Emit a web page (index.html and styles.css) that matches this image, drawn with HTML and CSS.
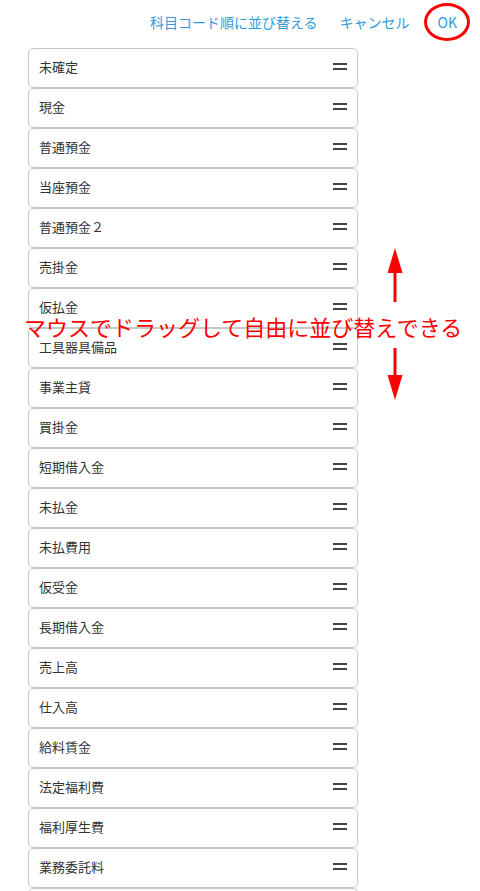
FILE: index.html
```html
<!DOCTYPE html>
<html lang="ja">
<head>
  <meta charset="UTF-8">
  <title>科目の並び替え</title>
  <link rel="stylesheet" href="styles.css">
</head>
<body>
  <header class="toolbar">
    <a class="link">科目コード順に並び替える</a>
    <a class="link">キャンセル</a>
    <a class="link ok">OK</a>
  </header>

  <ul class="sort-list">
    <li class="item"><span>未確定</span><i class="handle"></i></li>
    <li class="item"><span>現金</span><i class="handle"></i></li>
    <li class="item"><span>普通預金</span><i class="handle"></i></li>
    <li class="item"><span>当座預金</span><i class="handle"></i></li>
    <li class="item"><span>普通預金２</span><i class="handle"></i></li>
    <li class="item"><span>売掛金</span><i class="handle"></i></li>
    <li class="item"><span>仮払金</span><i class="handle"></i></li>
    <li class="item"><span>工具器具備品</span><i class="handle"></i></li>
    <li class="item"><span>事業主貸</span><i class="handle"></i></li>
    <li class="item"><span>買掛金</span><i class="handle"></i></li>
    <li class="item"><span>短期借入金</span><i class="handle"></i></li>
    <li class="item"><span>未払金</span><i class="handle"></i></li>
    <li class="item"><span>未払費用</span><i class="handle"></i></li>
    <li class="item"><span>仮受金</span><i class="handle"></i></li>
    <li class="item"><span>長期借入金</span><i class="handle"></i></li>
    <li class="item"><span>売上高</span><i class="handle"></i></li>
    <li class="item"><span>仕入高</span><i class="handle"></i></li>
    <li class="item"><span>給料賃金</span><i class="handle"></i></li>
    <li class="item"><span>法定福利費</span><i class="handle"></i></li>
    <li class="item"><span>福利厚生費</span><i class="handle"></i></li>
    <li class="item"><span>業務委託料</span><i class="handle"></i></li>
    <li class="item"><span>租税公課</span><i class="handle"></i></li>
  </ul>

  <!-- annotation overlay -->
  <p class="note">マウスでドラッグして自由に並び替えできる</p>
  <svg class="arrows" width="20" height="154" viewBox="0 0 20 154">
    <polygon points="10,0 2.5,25 17.5,25" fill="#ff0000"/>
    <rect x="8.5" y="22" width="3" height="32" fill="#ff0000"/>
    <rect x="8.5" y="100" width="3" height="32" fill="#ff0000"/>
    <polygon points="10,152 2.5,127 17.5,127" fill="#ff0000"/>
  </svg>
</body>
</html>
```

FILE: styles.css
```css
body {
  margin: 0;
  font-family: "Noto Sans CJK JP", "Noto Sans", sans-serif;
  color: #333;
  background: white;
  overflow: hidden;
}
.toolbar {
  display: flex;
  justify-content: flex-end;
  align-items: center;
  height: 44px;
  padding-right: 23px;
  gap: 22px;
}
.link {
  color: #3399dd;
  font-size: 14px;
  cursor: pointer;
}
.ok {
  position: relative;
  margin-left: 6px;
}
.ok::after {
  content: "";
  position: absolute;
  left: -14px;
  top: 50%;
  width: 40px;
  height: 32px;
  margin-top: -19px;
  border: 3px solid #ff0000;
  border-radius: 50%;
}
.sort-list {
  list-style: none;
  margin: 4px 0 0 28px;
  padding: 0;
  width: 330px;
}
.item {
  display: flex;
  justify-content: space-between;
  align-items: center;
  box-sizing: border-box;
  height: 40px;
  padding: 0 10px 3px;
  border: 1px solid #c8c8c8;
  border-radius: 5px;
  font-size: 13px;
  background: white;
}
.handle {
  display: block;
  width: 14px;
  height: 3px;
  border-top: 2px solid #444;
  border-bottom: 2px solid #444;
}
.note {
  position: absolute;
  left: 24px;
  top: 310px;
  margin: 0;
  color: #ff0000;
  font-size: 22px;
  line-height: 32px;
  white-space: nowrap;
}
.arrows {
  position: absolute;
  left: 385px;
  top: 248px;
}
```
